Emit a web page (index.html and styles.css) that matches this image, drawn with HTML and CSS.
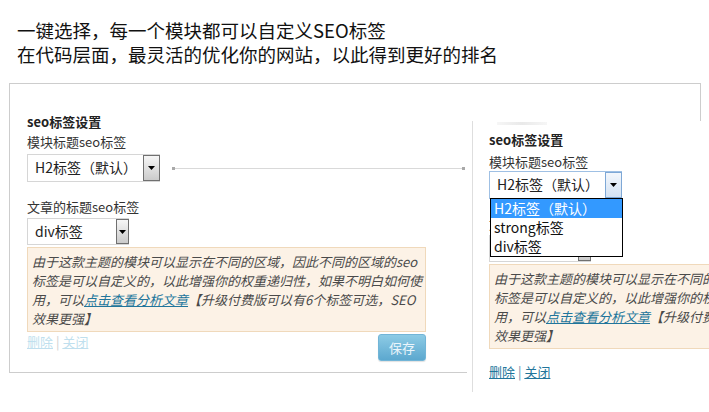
FILE: index.html
```html
<!DOCTYPE html>
<html lang="zh-CN">
<head>
<meta charset="utf-8">
<title>SEO标签设置</title>
<link rel="stylesheet" href="styles.css">
</head>
<body>
<div class="page">
  <header class="intro">
    <p>一键选择，每一个模块都可以自定义SEO标签</p>
    <p>在代码层面，最灵活的优化你的网站，以此得到更好的排名</p>
  </header>

  <div class="frame">
    <section class="panel">
      <h3 class="title">seo标签设置</h3>
      <div class="label">模块标题seo标签</div>
      <div class="row">
        <div class="select w1"><span class="value">H2标签（默认）</span><span class="arrow"><svg width="7" height="4" viewBox="0 0 7 4"><path d="M0 0h7L3.5 4z" fill="#000"/></svg></span></div>
        <div class="connector"><span class="dot"></span><span class="line"></span><span class="dot"></span></div>
      </div>
      <div class="label l2">文章的标题seo标签</div>
      <div class="select w2"><span class="value">div标签</span><span class="arrow narrow"><svg width="7" height="4" viewBox="0 0 7 4"><path d="M0 0h7L3.5 4z" fill="#000"/></svg></span></div>
      <div class="notice">由于这款主题的模块可以显示在不同的区域，因此不同的区域的seo<br>标签是可以自定义的，以此增强你的权重递归性，如果不明白如何使<br>用，可以<a class="doc-link" href="#">点击查看分析文章</a>【升级付费版可以有6个标签可选，SEO<br>效果更强】</div>
      <div class="actions">
        <span class="links faded"><a href="#">删除</a> <span class="sep">|</span> <a href="#">关闭</a></span>
        <button class="save" type="button">保存</button>
      </div>
    </section>
  </div>

  <div class="overlay">
    <section class="panel overlay-inner">
      <div class="smudge"></div>
      <h3 class="title">seo标签设置</h3>
      <div class="label ol">模块标题seo标签</div>
      <div class="select w1 focused"><span class="value">H2标签（默认）</span><span class="arrow"><svg width="7" height="4" viewBox="0 0 7 4"><path d="M0 0h7L3.5 4z" fill="#000"/></svg></span>
        <ul class="dropdown">
          <li class="active">H2标签（默认）</li>
          <li>strong标签</li>
          <li>div标签</li>
        </ul>
      </div>
      <div class="label l2">文章的标题seo标签</div>
      <div class="select w2"><span class="value">div标签</span><span class="arrow narrow"><svg width="7" height="4" viewBox="0 0 7 4"><path d="M0 0h7L3.5 4z" fill="#000"/></svg></span></div>
      <div class="notice">由于这款主题的模块可以显示在不同的区域，因此不同的区域的seo<br>标签是可以自定义的，以此增强你的权重递归性，如果不明白如何使<br>用，可以<a class="doc-link" href="#">点击查看分析文章</a>【升级付费版可以有6个标签可选，SEO<br>效果更强】</div>
      <div class="actions ol-actions">
        <span class="links"><a href="#">删除</a> <span class="sep">|</span> <a href="#">关闭</a></span>
        <button class="save" type="button">保存</button>
      </div>
    </section>
  </div>
</div>
</body>
</html>
```

FILE: styles.css
```css
* { box-sizing: border-box; }
html, body { margin: 0; padding: 0; background: #fff; }
body {
  font-family: "Noto Sans CJK SC", "Noto Sans", sans-serif;
  color: #333;
}
.page {
  position: relative;
  width: 709px;
  height: 412px;
  overflow: hidden;
}
.intro {
  padding: 18px 0 0 17px;
  font-size: 18.5px;
  line-height: 24px;
  color: #111;
}
.intro p { margin: 0; white-space: nowrap; }

.frame {
  margin: 17px 0 0 9px;
  width: 692px;
  border: 1px solid #cdcdcd;
  padding: 28px 17px 11px 17px;
}
.panel { font-size: 13px; }
.title {
  margin: 0;
  font-size: 13px;
  font-weight: bold;
  line-height: 20px;
  color: #222;
}
.label {
  line-height: 20px;
  color: #333;
}
.label.l2 { margin-top: 15px; }

.row {
  display: flex;
  align-items: center;
  margin-top: 2px;
}
.select {
  position: relative;
  display: flex;
  align-items: stretch;
  height: 28px;
  border: 1px solid #d6d6d6;
  background: #fff;
  font-size: 14px;
  color: #222;
}
.select.w1 { width: 133px; }
.select.w2 { width: 102px; height: 27px; margin-top: 1px; }
.select .value {
  flex: 1;
  padding-left: 7px;
  line-height: 25px;
  white-space: nowrap;
}
.select .arrow {
  width: 17px;
  margin-right: -1px;
  border: 1px solid #707070;
  background: linear-gradient(#f6f6f6, #cbcbcb);
  display: flex;
  align-items: center;
  justify-content: center;
}
.select .arrow.narrow { width: 13px; }
.select .arrow svg { display: block; }

.connector {
  display: flex;
  align-items: center;
  margin-left: 12px;
  width: 293px;
}
.connector .dot { width: 3px; height: 3px; background: #a9a9a9; }
.connector .line { flex: 1; height: 1px; background: #d9d9d9; }

.notice {
  margin-top: 2px;
  width: 399px;
  border: 1px solid #f0d9bb;
  background: #fcf2e6;
  padding: 4px 2px 3px 4px;
  font-style: italic;
  font-size: 13px;
  line-height: 19px;
  color: #4a4a4a;
  white-space: nowrap;
}
.doc-link { color: #21759b; text-decoration: underline; }

.actions {
  display: flex;
  justify-content: space-between;
  align-items: flex-start;
  width: 399px;
  margin-top: 2px;
}
.links { line-height: 16px; font-size: 13px; }
.links a { color: #21759b; text-decoration: underline; }
.links .sep { color: #6d8ea9; }
.links.faded a { color: #bfdfee; }
.links.faded .sep { color: #cfcfcf; }
.save {
  width: 48px;
  height: 27px;
  padding: 0;
  border: 1px solid #72b5d7;
  border-radius: 3px;
  background: linear-gradient(#8dcbe5, #5ca8cf);
  box-shadow: 0 1px 1px rgba(0, 0, 0, 0.12);
  color: #eaf5fb;
  font-family: inherit;
  font-size: 13px;
  line-height: 25px;
}

/* overlaid second screenshot */
.overlay {
  position: absolute;
  left: 467px;
  top: 121px;
  width: 440px;
  padding-left: 5px;
  background: #fff;
}
.overlay-inner {
  border-left: 1px solid #dedede;
  padding: 1px 0 1px 16px;
}
.smudge {
  margin-left: 8px;
  width: 50px;
  height: 3px;
  background: linear-gradient(90deg, #f6f6f6, #e9e9e9, #f6f6f6);
}
.overlay-inner .title { margin-top: 5px; }
.label.ol { margin-top: 3px; line-height: 18px; }
.select.focused { border-color: #9fc0e4; }
.select.focused .arrow {
  border-color: #7ea8d6;
  background: linear-gradient(#f3f7fc, #d3e2f3);
}
.dropdown {
  position: absolute;
  left: 0px;
  top: 100%;
  width: 133px;
  margin: 0;
  padding: 0;
  list-style: none;
  border: 1px solid #000;
  background: #fff;
  z-index: 2;
  font-size: 14px;
  color: #111;
}
.dropdown li {
  line-height: 19px;
  padding-left: 3px;
  white-space: nowrap;
}
.dropdown li.active { background: #3399ff; color: #fff; }
.ol-actions { margin-top: 15px; }
```
